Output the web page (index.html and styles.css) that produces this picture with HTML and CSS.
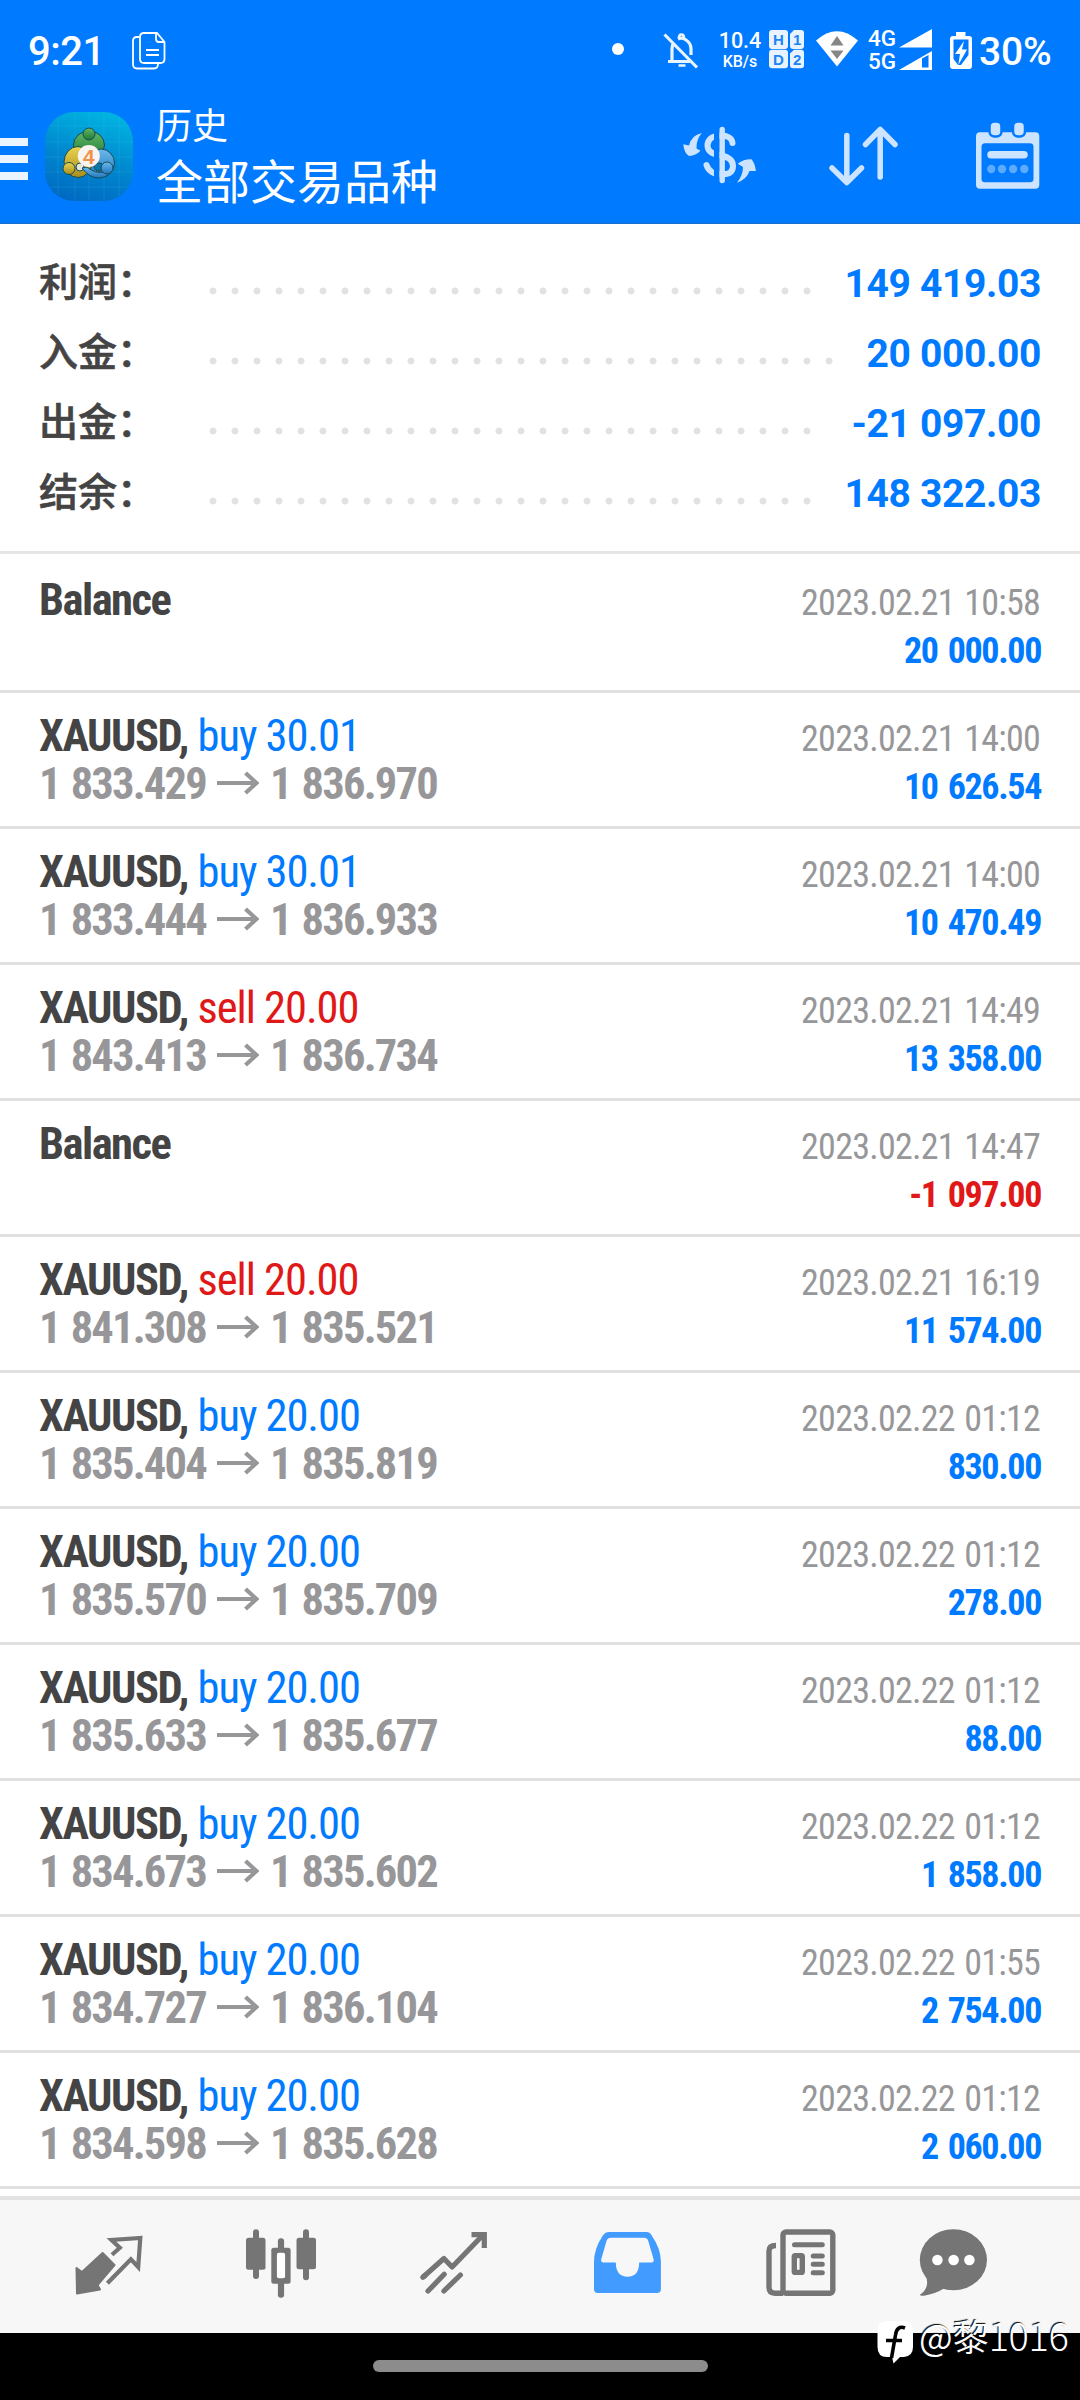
FILE: index.html
```html
<!DOCTYPE html>
<html lang="zh-CN">
<head>
<meta charset="utf-8">
<title>历史</title>
<link rel="stylesheet" href="styles.css">
</head>
<body>
<div class="screen">
<header class="header">
  <div class="status">
    <span class="clock">9:21</span>
    <svg class="copy" width="34" height="38" viewBox="0 0 34 38" fill="none" stroke="#fff" stroke-width="1.8"><path d="M7 5H5Q1 5 1 9V32Q1 36.500 5 36.500H22Q26 36.500 26 32"/><path d="M12 1H25L32.500 10V27Q32.500 31 28.500 31H12Q8 31 8 27V5Q8 1 12 1Z"/><path d="M24 1V7Q24 10 27 10H32.500M14 18H27M14 23H27"/></svg>
    <span class="dot"></span>
    <svg class="bell" width="36" height="38" viewBox="0 0 36 38" fill="none" stroke="#eaf4ff" stroke-width="3.200"><path d="M1.500 2.500L34 35.500"/><path d="M5 29.500H27M9 29V17Q9 13 11 11M15 7Q19 5 23 8Q28 11 28 17V23"/><path d="M16 6Q16 2.500 18.500 2.500Q21 2.500 21 6M15.500 33.500H22.500" stroke-width="2.600"/></svg>
    <div class="speed"><b>10.4</b><i>KB/s</i></div>
    <svg class="hd" width="36" height="39" viewBox="0 0 36 39"><g fill="#e8f3ff"><rect x="0" y="0" width="19" height="19" rx="3"/><rect x="0" y="19.700" width="19" height="18.500" rx="3"/><path d="M25 0H32Q35 0 35 3V16Q35 19 32 19H24Q21 19 21 16V4Z"/><path d="M25 19.700H32Q35 19.700 35 22.700V35Q35 38.200 32 38.200H24Q21 38.200 21 35V23.500Z"/></g><g class="hdt"><text x="9.500" y="15">H</text><text x="9.500" y="34.500">D</text><text x="28.200" y="15">1</text><text x="28.200" y="34.500">2</text></g></svg>
    <svg class="wifi" width="42" height="36" viewBox="0 0 42 36"><path d="M0 9.500Q21-9 42 9.500L21 35.500Z" fill="#fff"/><path d="M21 5L27.500 14.500H14.500ZM14.500 19.500H27.500L21 28Z" fill="#868686"/></svg>
    <div class="gen"><span>4G</span><span>5G</span></div>
    <svg class="signal" width="34" height="42" viewBox="0 0 34 42"><path d="M33 0V18.500H0ZM33 22V41H0Z" fill="#fff"/><path d="M23 29.500L29.500 26V38.500H23Z" fill="#007aff"/></svg>
    <svg class="battery" width="22" height="37" viewBox="0 0 22 37"><path d="M6 0H15.500V4H19Q22 4 22 7V34Q22 37 19 37H3Q0 37 0 34V7Q0 4 3 4H6Z" fill="#fff"/><path d="M3.500 7.500H18.500V23L11 33H8L3.500 27Z" fill="#007aff"/><path d="M14 9L5 22H10L8.300 33L17 17.500H12Z" fill="#fff"/></svg>
    <span class="pct">30%</span>
  </div>
  <div class="toolbar">
    <div class="burger"><span></span><span></span><span></span></div>
    <svg class="logo" width="88" height="89" viewBox="0 0 88 89">
      <defs><linearGradient id="bg" x1=".6" y1="0" x2=".3" y2="1"><stop offset="0" stop-color="#00b2e0"/><stop offset=".5" stop-color="#0089cf"/><stop offset="1" stop-color="#0069c2"/></linearGradient>
      <linearGradient id="gr" x1="0" y1="0" x2="0" y2="1"><stop offset="0" stop-color="#63b866"/><stop offset="1" stop-color="#1d7a35"/></linearGradient>
      <linearGradient id="ye" x1="0" y1="0" x2="0" y2="1"><stop offset="0" stop-color="#e9d550"/><stop offset="1" stop-color="#a98c1c"/></linearGradient>
      <linearGradient id="bl" x1="0" y1="0" x2="0" y2="1"><stop offset="0" stop-color="#6cb9ea"/><stop offset="1" stop-color="#2177bd"/></linearGradient></defs>
      <rect width="88" height="89" rx="29" fill="url(#bg)"/>
      <path d="M5 14H83M0 30H88M0 45H88M0 60H88M5 75H83M13 6V83M30 0V89M44 0V89M59 0V89M74 5V84" stroke="#49c4ee" stroke-opacity=".16"/>
      <g stroke="#164b56" stroke-width="1">
        <ellipse cx="44" cy="33" rx="15.500" ry="14" fill="url(#gr)"/>
        <ellipse cx="56" cy="51" rx="13.500" ry="14" fill="url(#bl)"/><ellipse cx="33" cy="50" rx="14" ry="15.500" fill="url(#ye)"/>
        <ellipse cx="54" cy="55" rx="5" ry="4" fill="#0b77a8"/><ellipse cx="35" cy="55" rx="4" ry="4" fill="#e5e6d8"/>
        <path d="M37 56Q44 66 54 66Q66 65 68 55L60 60Q50 62 42 55Z" fill="url(#bl)"/>
        <circle cx="44" cy="22" r="6" fill="url(#gr)"/><circle cx="24" cy="56.500" r="6" fill="url(#ye)"/><circle cx="62" cy="56" r="6" fill="url(#bl)"/>
      </g>
      <circle cx="43.800" cy="44" r="11" fill="#f8f4f1"/><text class="four" x="43.800" y="51.500">4</text>
    </svg>
    <div class="titles"><div class="t1">历史</div><div class="t2">全部交易品种</div></div>
    <div class="actions">
      <svg width="144" height="134" viewBox="0 0 144 134"><g fill="#cce4ff"><path d="M53.800 43Q43 45.500 41 55.500L35.300 54.300Q36 63 41 66Q48 65.500 52.500 60.700L48.500 58.500Q48 50 53.800 43Z"/><path d="M89 92.700Q99 89 101.500 81L107.900 81Q107 73 103.400 69.300Q96 69 89.700 73.700L95 77Q95 85 89 92.700Z"/></g><path d="M84.500 53C84 48 79 45.500 73 45.500C64 45.500 59.500 50 59.500 55.500C59.500 62 65 64 73 65.500C81 67 85 70 85 76C85 82 81 84.500 73 84.500C66 84.500 60.500 81 58.500 75" fill="none" stroke="#cce4ff" stroke-width="6" stroke-linecap="round"/><path d="M66 36H71.500V94H66Z" fill="#007aff"/><path d="M74.200 39.500V90.500" stroke="#cce4ff" stroke-width="5.400" stroke-linecap="round"/></svg>
      <svg width="144" height="134" viewBox="0 0 144 134" fill="none" stroke="#cce4ff" stroke-width="5.500" stroke-linecap="round" stroke-linejoin="round"><path d="M54.800 45.500V92M40 78L54.800 92.500L69.500 78M88.200 87V40M73.500 54.500L88.200 39.500L103 54.500"/></svg>
      <svg width="144" height="134" viewBox="0 0 144 134"><path fill-rule="evenodd" d="M44 42.300H99.300Q103.300 42.300 103.300 46.300V94.700Q103.300 98.700 99.300 98.700H44Q40 98.700 40 94.700V46.300Q40 42.300 44 42.300ZM49 53.300Q45.500 53.300 45.500 57V89Q45.500 92.300 49 92.300H94Q97.500 92.300 97.500 89V57Q97.500 53.300 94 53.300Z" fill="#cce4ff"/><g fill="#cce4ff" stroke="#007aff" stroke-width="2.500"><rect x="53.500" y="31.500" width="12" height="15" rx="5"/><rect x="77" y="31.500" width="12" height="15" rx="5"/></g><path d="M55 64.700H88" stroke="#cce4ff" stroke-width="7.500" stroke-linecap="round"/><g fill="#5cabff"><circle cx="55.200" cy="79" r="4.200"/><circle cx="66" cy="79" r="4.200"/><circle cx="77.100" cy="79" r="4.200"/><circle cx="88.300" cy="79" r="4.200"/></g></svg>
    </div>
  </div>
</header>
<section class="summary">
  <div class="srow"><span class="label">利润：</span><span class="dots"></span><span class="val">149 419.03</span></div>
  <div class="srow"><span class="label">入金：</span><span class="dots"></span><span class="val">20 000.00</span></div>
  <div class="srow"><span class="label">出金：</span><span class="dots"></span><span class="val">-21 097.00</span></div>
  <div class="srow"><span class="label">结余：</span><span class="dots"></span><span class="val">148 322.03</span></div>
</section>
<svg class="defs" width="0" height="0"><symbol id="arr" viewBox="0 0 42 24"><path d="M0 12H39M28.500 2L39.500 12L28.500 22" fill="none" stroke="#97979a" stroke-width="4.200"/></symbol></svg>
<main class="list">
  <div class="row"><div class="line"><span class="sym">Balance</span><span class="date">2023.02.21 10:58</span></div><div class="line"><span>&nbsp;</span><span class="amt">20 000.00</span></div></div>
  <div class="row"><div class="line"><span><span class="sym">XAUUSD,</span> <span class="buy">buy 30.01</span></span><span class="date">2023.02.21 14:00</span></div><div class="line"><span class="price">1 833.429<svg class="arrow"><use href="#arr"/></svg>1 836.970</span><span class="amt">10 626.54</span></div></div>
  <div class="row"><div class="line"><span><span class="sym">XAUUSD,</span> <span class="buy">buy 30.01</span></span><span class="date">2023.02.21 14:00</span></div><div class="line"><span class="price">1 833.444<svg class="arrow"><use href="#arr"/></svg>1 836.933</span><span class="amt">10 470.49</span></div></div>
  <div class="row"><div class="line"><span><span class="sym">XAUUSD,</span> <span class="sell">sell 20.00</span></span><span class="date">2023.02.21 14:49</span></div><div class="line"><span class="price">1 843.413<svg class="arrow"><use href="#arr"/></svg>1 836.734</span><span class="amt">13 358.00</span></div></div>
  <div class="row"><div class="line"><span class="sym">Balance</span><span class="date">2023.02.21 14:47</span></div><div class="line"><span>&nbsp;</span><span class="amt neg">-1 097.00</span></div></div>
  <div class="row"><div class="line"><span><span class="sym">XAUUSD,</span> <span class="sell">sell 20.00</span></span><span class="date">2023.02.21 16:19</span></div><div class="line"><span class="price">1 841.308<svg class="arrow"><use href="#arr"/></svg>1 835.521</span><span class="amt">11 574.00</span></div></div>
  <div class="row"><div class="line"><span><span class="sym">XAUUSD,</span> <span class="buy">buy 20.00</span></span><span class="date">2023.02.22 01:12</span></div><div class="line"><span class="price">1 835.404<svg class="arrow"><use href="#arr"/></svg>1 835.819</span><span class="amt">830.00</span></div></div>
  <div class="row"><div class="line"><span><span class="sym">XAUUSD,</span> <span class="buy">buy 20.00</span></span><span class="date">2023.02.22 01:12</span></div><div class="line"><span class="price">1 835.570<svg class="arrow"><use href="#arr"/></svg>1 835.709</span><span class="amt">278.00</span></div></div>
  <div class="row"><div class="line"><span><span class="sym">XAUUSD,</span> <span class="buy">buy 20.00</span></span><span class="date">2023.02.22 01:12</span></div><div class="line"><span class="price">1 835.633<svg class="arrow"><use href="#arr"/></svg>1 835.677</span><span class="amt">88.00</span></div></div>
  <div class="row"><div class="line"><span><span class="sym">XAUUSD,</span> <span class="buy">buy 20.00</span></span><span class="date">2023.02.22 01:12</span></div><div class="line"><span class="price">1 834.673<svg class="arrow"><use href="#arr"/></svg>1 835.602</span><span class="amt">1 858.00</span></div></div>
  <div class="row"><div class="line"><span><span class="sym">XAUUSD,</span> <span class="buy">buy 20.00</span></span><span class="date">2023.02.22 01:55</span></div><div class="line"><span class="price">1 834.727<svg class="arrow"><use href="#arr"/></svg>1 836.104</span><span class="amt">2 754.00</span></div></div>
  <div class="row"><div class="line"><span><span class="sym">XAUUSD,</span> <span class="buy">buy 20.00</span></span><span class="date">2023.02.22 01:12</span></div><div class="line"><span class="price">1 834.598<svg class="arrow"><use href="#arr"/></svg>1 835.628</span><span class="amt">2 060.00</span></div></div>
</main>
<nav class="tabs">
  <svg viewBox="0 0 173 133"><path d="M53.500 68L59 72L79.600 53L91.500 65L74.500 85L77 89.500L54 93.500Z" fill="#757575" stroke="#757575" stroke-width="2" stroke-linejoin="round"/><path d="M89 54.700L96.800 47.700L88.500 40L117.300 38L115.200 67L107.900 59.300L84.400 83.300" fill="none" stroke="#757575" stroke-width="4.200"/></svg>
  <svg viewBox="0 0 173 133" fill="#757575"><rect x="50" y="37.700" width="19.500" height="32" rx="2.500"/><rect x="57" y="29.300" width="6" height="49.700" rx="3"/><rect x="81.900" y="38.300" width="6.200" height="59.400" rx="3"/><rect x="75.300" y="47.700" width="19.300" height="36" rx="2.500"/><rect x="80.900" y="52.700" width="8.200" height="25.600" rx="2" fill="#fff"/><rect x="100.500" y="37.700" width="19.500" height="31.600" rx="2.500"/><rect x="107" y="29.300" width="6" height="51" rx="3"/></svg>
  <svg viewBox="0 0 173 133" fill="none" stroke="#757575" stroke-width="5.200"><path d="M53.900 77.300L74.900 58.500L83.100 67L114 35" stroke-linejoin="round"/><path d="M102.500 34.600H115.300V48"/><path d="M59 91L75.200 74.300M74.900 91L91.400 75M53.900 77.300L56 75.500" stroke-linecap="round"/></svg>
  <svg viewBox="0 0 173 133"><path fill-rule="evenodd" d="M67 32H104.500Q108 32 110 36Q119 49 118.900 62V89Q118.900 93 115 93H56Q52 93 52 89V62Q52 49 60.500 36Q63 32 67 32ZM69 37.700Q65.500 37.700 64.500 41L59.300 59Q58.500 62.500 61.500 62.500H73.800Q74 76.700 85.500 76.700Q97 76.700 97.200 62.500H109.500Q112.500 62.500 111.500 59L106.300 41Q105.300 37.700 102 37.700Z" fill="#429bff"/></svg>
  <svg viewBox="0 0 173 133" fill="none" stroke="#757575" stroke-width="5.400"><rect x="68" y="32" width="49.800" height="61.200" rx="3"/><path d="M61 45.500Q54 45.500 54 51V87Q54 93.200 60 93.200H68"/><path d="M79.500 44.700H107.300M98.200 56H107.300M98.200 64.300H107.300M98.200 72.700H107.300" stroke-width="5" stroke-linecap="round"/><rect x="79.300" y="55.600" width="8" height="16.800" rx="1"/></svg>
  <svg viewBox="0 0 173 133"><g fill="#757575"><ellipse cx="65.400" cy="59.800" rx="33.600" ry="30.500"/><path d="M38 76Q42 88 32.200 94.500Q31 96 36 95.700Q47 94 56 88.500Z"/></g><g fill="#fff"><circle cx="49.400" cy="60" r="5.300"/><circle cx="65.600" cy="60" r="5.300"/><circle cx="81.400" cy="60" r="5.300"/></g></svg>
</nav>
<footer class="gesture"><span class="pill"></span></footer>
<div class="mark"><svg width="38" height="44" viewBox="0 0 38 44"><path d="M10 1H27Q36 1 36 11V27Q36 36 27 37H23L16.500 43.500L15 37H10Q.5 37 .5 27V11Q.5 1 10 1Z" fill="#fff"/><path d="M28 8Q20 5 18.500 15L14.500 38M9 20.500H25" fill="none" stroke="#000" stroke-width="3.600"/></svg><span>@黎<span class="digits">1016</span></span></div>
</div>
</body>
</html>
```
FILE: styles.css
```css
* { box-sizing: border-box; }
body { margin: 0; }
.screen { position: relative; width: 1080px; height: 2400px; overflow: hidden; background: #fff; display: flex; flex-direction: column; font-family: Roboto, "Noto Sans CJK SC", sans-serif; }
.screen svg { display: block; flex: none; }
.header { height: 224px; background: #007aff; color: #fff; border-bottom: 1px solid #1a6fc8; flex: none; }
.status { height: 90px; display: flex; align-items: flex-start; }
.clock { width: 105px; padding-left: 28px; margin-top: 32px; font-size: 40px; line-height: 40px; font-weight: 500; letter-spacing: -.5px; }
.copy { margin: 32px 0 0 27px; }
.dot { width: 12px; height: 12px; border-radius: 50%; background: #fff; margin: 43px 0 0 446px; }
.bell { margin: 32px 0 0 39px; }
.speed { width: 50px; margin: 30px 0 0 16px; display: flex; flex-direction: column; align-items: center; }
.speed b { font-size: 21.500px; line-height: 22px; font-weight: 500; }
.speed i { font-style: normal; font-size: 16px; line-height: 16px; font-weight: 500; margin-top: 2px; }
.hd { margin: 30px 0 0 4px; }
.hdt text { font: 700 15px "Liberation Sans", sans-serif; text-anchor: middle; fill: #1d84f5; }
.wifi { margin: 31px 0 0 11px; }
.gen { width: 30px; margin: 27px 0 0 10px; display: flex; flex-direction: column; font-size: 22.500px; line-height: 23px; font-weight: 500; }
.signal { margin: 29px 0 0 1px; }
.battery { margin: 32px 0 0 17px; }
.pct { margin: 32px 0 0 7px; font-size: 39px; line-height: 40px; font-weight: 500; letter-spacing: -.2px; }
.toolbar { height: 133px; display: flex; align-items: flex-start; }
.burger { width: 28px; margin-top: 48px; display: flex; flex-direction: column; gap: 9px; }
.burger span { height: 8px; background: #ecf5ff; }
.logo { margin: 22px 0 0 17px; }
.four { font: 700 21px "Liberation Sans", sans-serif; text-anchor: middle; fill: #f0924a; }
.titles { margin: 8px 0 0 23px; font-family: "Noto Sans CJK SC", sans-serif; font-weight: 400; white-space: nowrap; }
.t1 { font-size: 36px; line-height: 50px; }
.t2 { font-size: 47px; line-height: 62px; }
.actions { display: flex; margin-left: auto; }
.summary { height: 330px; padding: 24px 39px 0 39px; border-bottom: 3px solid #e5e5e5; flex: none; }
.srow { height: 70px; display: flex; align-items: center; }
.label { width: 165px; margin-top: -8px; font: 500 39px/70px "Noto Sans CJK SC", sans-serif; color: #444; -webkit-text-stroke: .6px #444; white-space: nowrap; }
.dots { flex: 1; height: 8px; margin: 16px 29px 0 5px; background: radial-gradient(circle at 4px 4px, #e2e2e2 3.200px, transparent 3.800px) 0 0 / 22px 8px repeat-x; }
.val { margin-top: 1px; font-size: 39px; line-height: 70px; font-weight: 700; letter-spacing: -.35px; color: #007aff; }
.list { height: 1642px; font-family: "Roboto Condensed", Roboto, sans-serif; font-stretch: 75%; padding-top: 3px; flex: none; }
.row { height: 136px; padding: 19px 39px 0 39px; border-bottom: 3px solid #e1e1e1; }
.line { height: 48px; line-height: 48px; display: flex; justify-content: space-between; align-items: baseline; white-space: nowrap; font-size: 44.500px; letter-spacing: -1.500px; }
.sym { font-weight: 700; color: #444; }
.buy, .sell { letter-spacing: -1.050px; margin-left: 1px; }
.buy { color: #007aff; }
.sell { color: #e01818; }
.price { font-weight: 700; letter-spacing: -1.800px; word-spacing: 2.500px; color: #97979a; }
.screen .arrow { display: inline-block; width: 42px; height: 24px; margin: 0 11px; vertical-align: 4px; }
.date { margin-right: 1px; font-size: 36px; letter-spacing: -.75px; word-spacing: 2px; color: #97979a; }
.amt { font-size: 36px; font-weight: 700; letter-spacing: -1.350px; word-spacing: 3px; color: #007aff; }
.neg { color: #e01818; }
.tabs { height: 137px; background: #f7f7f7; border-top: 4px solid #e3e3e3; padding-left: 23px; display: flex; flex: none; }
.tabs svg { width: 173px; height: 133px; }
.gesture { height: 67px; background: #000; padding-top: 27px; flex: none; }
.pill { display: block; width: 335px; height: 12px; border-radius: 6px; margin: 0 auto; background: #8c8c8c; }
.mark { position: absolute; left: 877px; top: 2320px; display: flex; gap: 4px; color: #fff; font: 350 36px/30px "Noto Sans CJK SC", sans-serif; text-shadow: -1px -1px 1px #000; white-space: nowrap; }
.digits { font-size: 38px; font-weight: 300; letter-spacing: -.400px; }
```
